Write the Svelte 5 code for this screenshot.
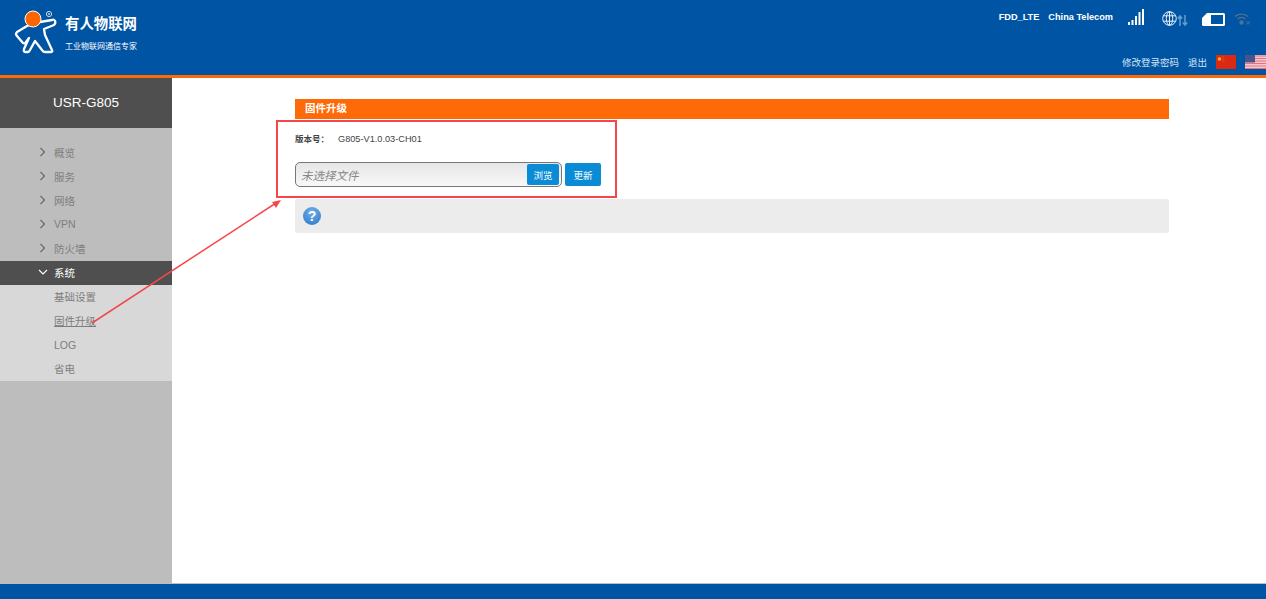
<script>
	const menu = ['概览', '服务', '网络', 'VPN', '防火墙'];
	const sub = ['基础设置', '固件升级', 'LOG', '省电'];
</script>

<div class="page">
	<header class="top">
		<div class="brand">
			<svg class="logo" viewBox="5 5 60 50" aria-hidden="true">
				<path
					d="M27 26 L17 32 Q15 34 17 36 L23 43 Q25 44 26 42 L29 38 L24 49 Q23 52 26 52 L28 52 Q29 52 30 50 L35 41 L42 50 Q43 52 45 52 L51 52 Q53 52 52 50 L45 35 L44 29 L54 25 Q56 23 55 21 Q54 19 52 20 L40 22 Z"
					fill="#0054a4"
					stroke="#fff"
					stroke-width="2.300"
					stroke-linejoin="round"
				/>
				<circle cx="33" cy="19" r="8" fill="#f60" stroke="#fff" stroke-width="1" />
				<circle cx="49" cy="14" r="2.600" fill="none" stroke="#c9dcee" stroke-width="1" />
				<circle cx="49" cy="14" r="0.900" fill="#c9dcee" />
			</svg>
			<div class="brand-text">
				<strong>有人物联网</strong>
				<span>工业物联网通信专家</span>
			</div>
		</div>
		<div class="top-right">
			<div class="status">
				<span class="net">FDD_LTE</span>
				<span class="net">China Telecom</span>
				<svg class="signal" viewBox="0 0 16 16" aria-hidden="true">
					<path d="M0 16v-3h2v3zm3.500 0v-5h2v5zm3.500 0V7h2v9zm3.500 0V3h2v13zm3.500 0V0h2v16z" fill="#fff" />
				</svg>
				<svg class="globe" viewBox="0 0 27 15" aria-hidden="true">
					<g fill="none" stroke="#e4eef7" stroke-width="1">
						<circle cx="7.500" cy="7.500" r="6.800" />
						<ellipse cx="7.500" cy="7.500" rx="3.200" ry="6.800" />
						<path d="M7.500 .7v13.600M1.400 4.800h12.200M1.400 10.200h12.200" />
					</g>
					<path d="M18 15V5m-2.200 2.500L18 5l2.200 2.500M23 4v10m-2.200-2.500L23 14l2.200-2.500" fill="none" stroke="#5d9ccf" stroke-width="1.600" />
				</svg>
				<svg class="sim" viewBox="0 0 23 13" aria-hidden="true">
					<path d="M5 0h16.500a1.500 1.500 0 0 1 1.500 1.500v10a1.500 1.500 0 0 1-1.500 1.500h-20A1.500 1.500 0 0 1 0 11.500V5z" fill="#fff" />
					<rect x="9" y="2" width="12" height="9" fill="#0054a4" />
				</svg>
				<svg class="wifi" viewBox="0 0 16 12" aria-hidden="true">
					<g fill="none" stroke="#4f7290" stroke-width="1.400">
						<path d="M0 3.500a10 10 0 0 1 13 0M2.500 6a6 6 0 0 1 8 0" />
					</g>
					<circle cx="6.500" cy="9.500" r="2.200" fill="#4f7290" />
					<path d="M11.500 8l3.500 3.500m0-3.500l-3.500 3.500" stroke="#4f7290" stroke-width="1" />
				</svg>
			</div>
			<div class="links">
				<span>修改登录密码</span>
				<span>退出</span>
				<svg class="flag" viewBox="0 0 20 14" aria-hidden="true">
					<rect width="20" height="14" fill="#dc2a12" />
					<circle cx="3.500" cy="4" r="1.800" fill="#f0b51f" />
					<circle cx="7" cy="2" r="0.600" fill="#e9791a" />
					<circle cx="8" cy="4" r="0.600" fill="#e9791a" />
					<circle cx="7" cy="6" r="0.600" fill="#e9791a" />
				</svg>
				<svg class="flag us" viewBox="0 0 21 14" aria-hidden="true">
					<rect width="21" height="14" fill="#f6c9cf" />
					<path d="M0 1h21M0 3.500h21M0 6h21M0 8.500h21M0 11h21M0 13.500h21" stroke="#e8707f" stroke-width="1.200" />
					<rect width="10" height="7.500" fill="#44548c" />
				</svg>
			</div>
		</div>
	</header>

	<div class="middle">
		<nav class="side">
			<div class="model">USR-G805</div>
			<ul class="menu">
				{#each menu as item}
					<li>
						<svg class="chev" viewBox="0 0 10 10" aria-hidden="true">
							<path d="M2.500 1L6.500 5 2.500 9" fill="none" stroke="currentColor" stroke-width="1.100" />
						</svg>
						{item}
					</li>
				{/each}
				<li class="open">
					<svg class="chev" viewBox="0 0 10 10" aria-hidden="true">
						<path d="M1 3L5 7 9 3" fill="none" stroke="currentColor" stroke-width="1.100" />
					</svg>
					系统
				</li>
			</ul>
			<ul class="submenu">
				{#each sub as item, i}
					<li class:current={i === 1}>{item}</li>
				{/each}
			</ul>
		</nav>

		<main class="content">
			<h2 class="section">固件升级</h2>
			<div class="version">
				<b>版本号：</b>
				<span>G805-V1.0.03-CH01</span>
			</div>
			<div class="upload">
				<div class="file">
					<em>未选择文件</em>
					<span class="browse">浏览</span>
				</div>
				<button type="button" class="update">更新</button>
			</div>
			<div class="help">
				<span class="q">?</span>
			</div>
		</main>
	</div>

	<footer class="bottom"></footer>

	<!-- screenshot annotation drawn on top of the page -->
	<div class="mark"></div>
	<svg class="arrow" viewBox="0 0 1266 599" aria-hidden="true">
		<path d="M92 323 L276 203" stroke="#f4474b" stroke-width="1.500" fill="none" />
		<path d="M281 200 L272 202 L276 208 Z" fill="#f4474b" />
	</svg>
</div>

<style>
	:global(body) {
		font-family: 'Liberation Sans', 'Noto Sans CJK SC', sans-serif;
	}

	.page {
		position: relative;
		display: flex;
		flex-direction: column;
		height: 599px;
		overflow: hidden;
		background: #fff;
	}

	.top {
		flex: none;
		display: flex;
		justify-content: space-between;
		box-sizing: border-box;
		height: 78px;
		background: #0054a4;
		border-bottom: 3px solid #ff6a08;
		color: #fff;
	}

	.brand {
		display: flex;
		align-items: flex-start;
		padding: 5px 0 0 5px;
	}

	.logo {
		width: 60px;
		height: 50px;
	}

	.brand-text {
		display: flex;
		flex-direction: column;
		gap: 9px;
		padding-top: 10px;
	}

	.brand-text strong {
		font-size: 14.400px;
		line-height: 18px;
	}

	.brand-text span {
		font-size: 8px;
		line-height: 10px;
	}

	.top-right {
		display: flex;
		flex-direction: column;
		align-items: flex-end;
		gap: 29px;
		padding-top: 8px;
	}

	.status {
		display: flex;
		align-items: center;
		height: 18px;
		padding-right: 15px;
	}

	.net {
		margin-right: 9px;
		font-size: 9.200px;
		font-weight: 700;
	}

	.signal {
		width: 16px;
		height: 16px;
		margin: 0 18px 0 6px;
	}

	.globe {
		width: 27px;
		height: 15px;
		margin: 2px 13px 0 0;
	}

	.sim {
		width: 23px;
		height: 13px;
		margin: 4px 10px 0 0;
	}

	.wifi {
		width: 16px;
		height: 12px;
		margin-top: 4px;
	}

	.links {
		display: flex;
		align-items: center;
		gap: 9px;
		height: 14px;
		font-size: 9.500px;
		color: #d6e4f2;
	}

	.flag {
		width: 20px;
		height: 14px;
	}

	.flag.us {
		width: 21px;
	}

	.middle {
		flex: 1;
		display: flex;
		min-height: 0;
	}

	.side {
		flex: none;
		width: 172px;
		background: #bdbdbd;
	}

	.model {
		height: 50px;
		background: #4f4f4f;
		color: #fff;
		font-size: 13.500px;
		line-height: 49px;
		text-align: center;
	}

	.menu {
		margin: 0;
		padding: 13px 0 0;
		list-style: none;
	}

	.menu li {
		display: flex;
		align-items: center;
		box-sizing: border-box;
		height: 24px;
		padding: 0 0 2px 38px;
		font-size: 10.500px;
		color: #7d7d7d;
	}

	.chev {
		width: 10px;
		height: 10px;
		margin-right: 6px;
		color: #666;
	}

	.menu li.open {
		background: #4f4f4f;
		color: #fff;
	}

	.open .chev {
		color: #fff;
	}

	.submenu {
		margin: 0;
		padding: 0;
		background: #d8d8d8;
		list-style: none;
	}

	.submenu li {
		height: 24px;
		padding-left: 54px;
		font-size: 10.500px;
		line-height: 24px;
		color: #7d7d7d;
	}

	.submenu li.current {
		text-decoration: underline;
	}

	.content {
		flex: 1;
		padding: 21px 97px 0 123px;
	}

	.section {
		height: 20px;
		margin: 0;
		padding-left: 10px;
		background: #ff6a08;
		color: #fff;
		font-size: 10.500px;
		font-weight: 700;
		line-height: 19px;
	}

	.version {
		display: flex;
		gap: 10px;
		margin-top: 14px;
		font-size: 9.200px;
		line-height: 12px;
		color: #444;
		white-space: nowrap;
	}

	.version b {
		width: 33px;
		font-size: 8.500px;
	}

	.upload {
		display: flex;
		align-items: center;
		gap: 3px;
		margin-top: 17px;
	}

	.file {
		display: flex;
		align-items: center;
		justify-content: space-between;
		box-sizing: border-box;
		width: 267px;
		height: 25px;
		padding: 0 2px 0 5px;
		border: 1px solid #777;
		border-radius: 5px;
		background: linear-gradient(#e6e6e6, #f8f8f8);
	}

	.file em {
		font-size: 11.500px;
		color: #888;
	}

	.browse,
	.update {
		display: grid;
		place-items: center;
		height: 21px;
		border-radius: 2px;
		background: #0a8bd6;
		color: #fff;
		font-size: 9.500px;
		font-family: inherit;
	}

	.browse {
		width: 32px;
	}

	.update {
		width: 36px;
		height: 23px;
		padding: 0;
		border: none;
	}

	.help {
		display: flex;
		align-items: center;
		height: 34px;
		margin-top: 12px;
		padding-left: 8px;
		background: #ececec;
		border-radius: 2px;
	}

	.q {
		display: grid;
		place-items: center;
		width: 18px;
		height: 18px;
		border-radius: 50%;
		background: radial-gradient(circle at 50% 30%, #6fb0ea, #2c74c4);
		color: #fff;
		font-size: 14px;
		font-weight: 700;
	}

	.bottom {
		flex: none;
		height: 15px;
		background: #0054a4;
		box-shadow: 0 -1px 0 #b9c0c8;
	}

	.mark {
		position: absolute;
		left: 276px;
		top: 120px;
		box-sizing: border-box;
		width: 341px;
		height: 78px;
		border: 2px solid #f4474b;
	}

	.arrow {
		position: absolute;
		inset: 0;
		width: 1266px;
		height: 599px;
		pointer-events: none;
	}
</style>
